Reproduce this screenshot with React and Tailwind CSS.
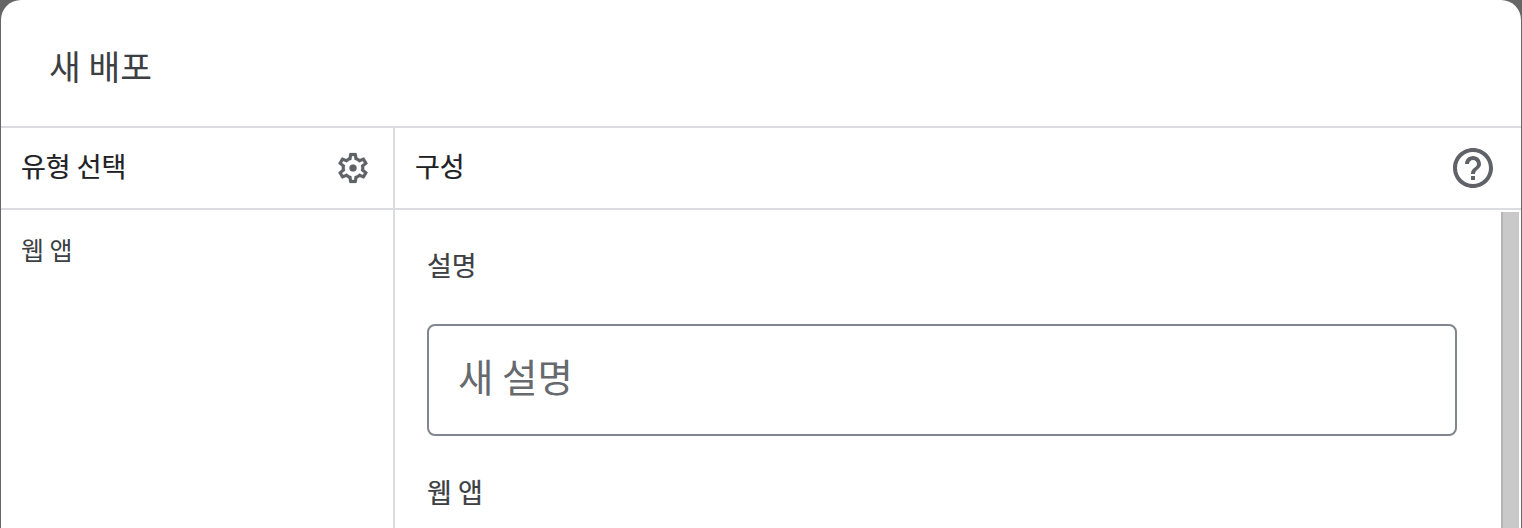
const fontStack = 'font-["Noto_Sans_CJK_KR",sans-serif]';

const SettingsIcon = () => (
  <svg width="36" height="36" viewBox="0 0 24 24" fill="#5f6368" stroke="#5f6368" strokeWidth="0.15">
    <path d="M19.43 12.98c.04-.32.07-.64.07-.98 0-.34-.03-.66-.07-.98l2.11-1.65c.19-.15.24-.42.12-.64l-2-3.46c-.09-.16-.26-.25-.44-.25-.06 0-.12.01-.17.03l-2.49 1c-.52-.4-1.08-.73-1.69-.98l-.38-2.65C14.46 2.18 14.25 2 14 2h-4c-.25 0-.46.18-.49.42l-.38 2.65c-.61.25-1.17.59-1.69.98l-2.49-1c-.06-.02-.12-.03-.18-.03-.17 0-.34.09-.43.25l-2 3.46c-.13.22-.07.49.12.64l2.11 1.65c-.04.32-.07.65-.07.98 0 .33.03.66.07.98l-2.11 1.65c-.19.15-.24.42-.12.64l2 3.46c.09.16.26.25.44.25.06 0 .12-.01.17-.03l2.49-1c.52.4 1.08.73 1.69.98l.38 2.65c.03.24.24.42.49.42h4c.25 0 .46-.18.49-.42l.38-2.65c.61-.25 1.17-.59 1.69-.98l2.49 1c.06.02.12.03.18.03.17 0 .34-.09.43-.25l2-3.46c.12-.22.07-.49-.12-.64l-2.11-1.65zm-1.98-1.71c.04.31.05.52.05.73 0 .21-.02.43-.05.73l-.14 1.13.89.7 1.08.84-.7 1.21-1.27-.51-1.04-.42-.9.68c-.43.32-.84.56-1.25.73l-1.06.43-.16 1.13-.2 1.35h-1.4l-.19-1.35-.16-1.13-1.06-.43c-.43-.18-.83-.41-1.23-.71l-.91-.7-1.06.43-1.27.51-.7-1.21 1.08-.84.89-.7-.14-1.13c-.03-.31-.05-.54-.05-.74s.02-.43.05-.73l.14-1.13-.89-.7-1.08-.84.7-1.21 1.27.51 1.04.42.9-.68c.43-.32.84-.56 1.25-.73l1.06-.43.16-1.13.2-1.35h1.39l.19 1.35.16 1.13 1.06.43c.43.18.83.41 1.23.71l.91.7 1.06-.43 1.27-.51.7 1.21-1.07.85-.89.7.14 1.13z" />
    <circle cx="12" cy="12" r="2.4" />
  </svg>
);

const HelpIcon = () => (
  <svg width="48" height="48" viewBox="0 0 24 24" fill="#5f6368">
    <path d="M11 18h2v-2h-2v2zm1-16C6.48 2 2 6.48 2 12s4.48 10 10 10 10-4.48 10-10S17.52 2 12 2zm0 18c-4.41 0-8-3.59-8-8s3.59-8 8-8 8 3.59 8 8-3.59 8-8 8zm0-14c-2.21 0-4 1.79-4 4h2c0-1.1.9-2 2-2s2 .9 2 2c0 2-3 1.75-3 5h2c0-2.25 3-2.5 3-5 0-2.21-1.79-4-4-4z" />
  </svg>
);

export default function App() {
  return (
    <div className={`h-[528px] w-[1522px] overflow-hidden bg-[#666666] px-[1px] ${fontStack}`}>
      <div className="flex h-full flex-col rounded-t-[20px] bg-white">
        {/* 제목 */}
        <div className="flex h-[128px] shrink-0 items-center border-b-2 border-[#dadce0] pt-[5px] pl-[48px]">
          <h2 className="text-[34.5px] leading-none font-normal text-[#3c4043]">새 배포</h2>
        </div>

        <div className="flex min-h-0 flex-1">
          {/* 유형 선택 */}
          <div className="w-[394px] shrink-0 border-r-2 border-[#dadce0]">
            <div className="flex h-[82px] items-center justify-between border-b-2 border-[#dadce0] pr-[22px] pl-[20px]">
              <span className="mb-[6px] text-[27px] leading-none text-[#202124] [-webkit-text-stroke:0.2px]">유형 선택</span>
              <SettingsIcon />
            </div>
            <div className="pt-[27px] pl-[20px] text-[25px] leading-none text-[#3c4043]">웹 앱</div>
          </div>

          {/* 구성 */}
          <div className="flex min-w-0 flex-1 flex-col">
            <div className="flex h-[82px] shrink-0 items-center justify-between border-b-2 border-[#dadce0] pr-[24px] pl-[20px]">
              <span className="mb-[6px] text-[27px] leading-none text-[#202124] [-webkit-text-stroke:0.2px]">구성</span>
              <HelpIcon />
            </div>
            <div className="flex min-h-0 flex-1">
              <div className="min-w-0 flex-1 pt-[41px] pr-[44px] pl-[32px]">
                <div className="text-[27px] leading-none font-normal text-[#3c4043] [-webkit-text-stroke:0.2px]">설명</div>
                <div className="mt-[46px] flex h-[112px] items-center rounded-[8px] border-2 border-[#80868b] pb-[8px] pl-[29px] text-[38.5px] text-[#666a6e]">
                  새 설명
                </div>
                <div className="mt-[42px] text-[27px] leading-none font-normal text-[#3c4043] [-webkit-text-stroke:0.2px]">웹 앱</div>
              </div>
              <div className="mt-[2px] mr-[2px] w-[18px] shrink-0 border-l-2 border-[#b4b4b4] bg-[#c9c9c9]" />
            </div>
          </div>
        </div>
      </div>
    </div>
  );
}
